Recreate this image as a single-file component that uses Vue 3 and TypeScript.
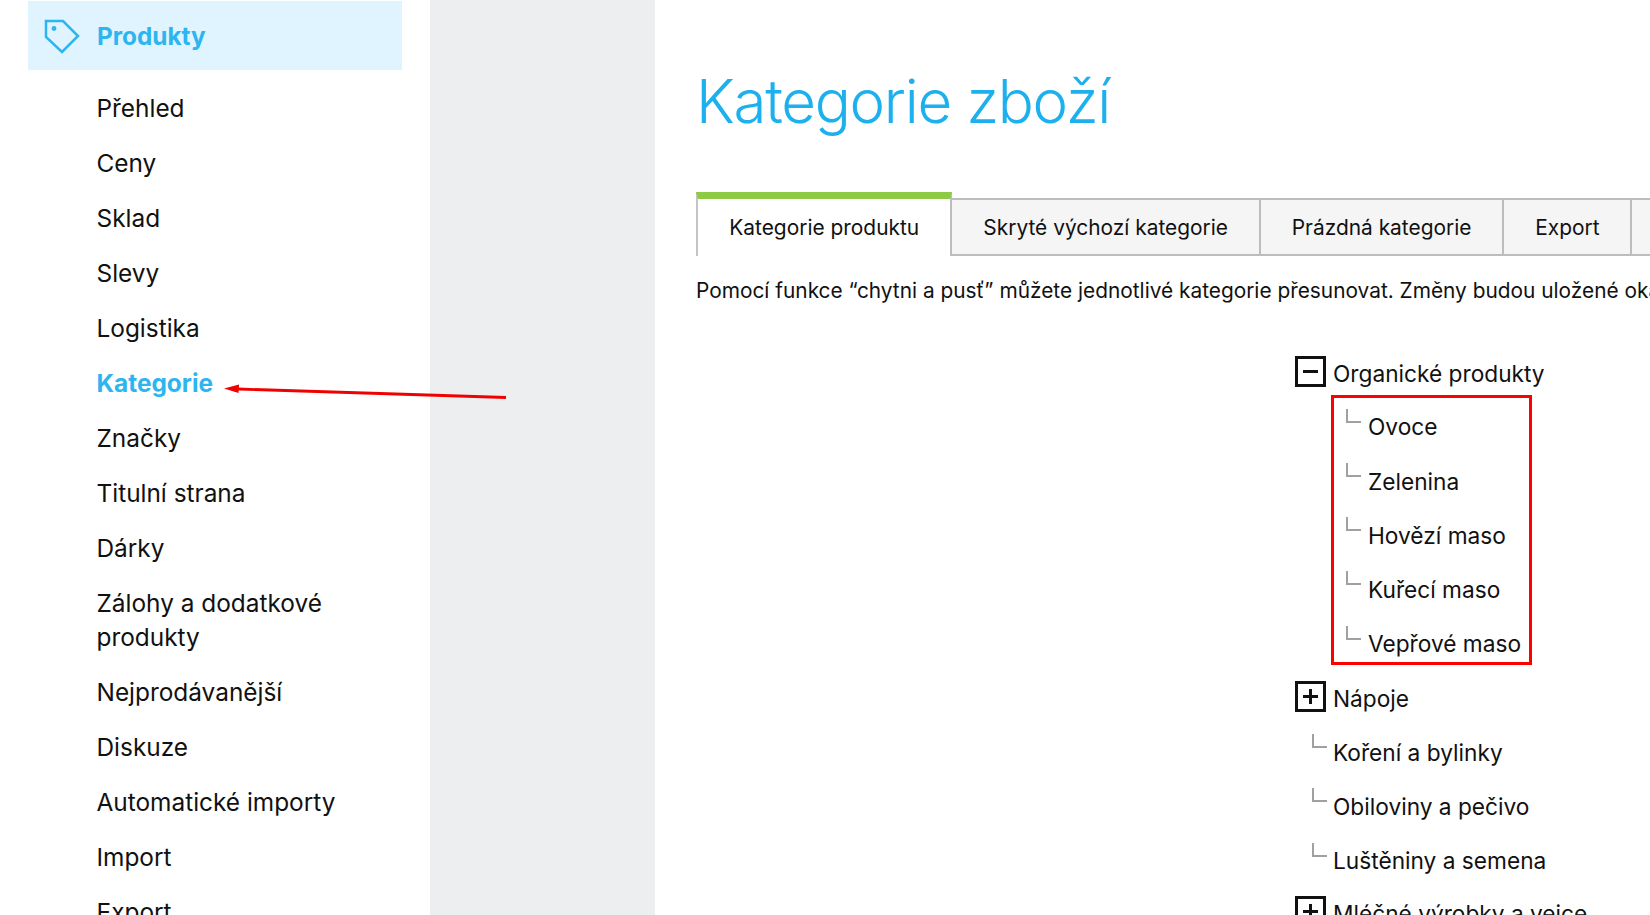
<script setup lang="ts">
interface NavItem { label: string; active?: boolean }
interface TreeGroup { label: string; open: boolean; marked?: boolean; children: string[] }

const nav: NavItem[] = [
  { label: 'Přehled' }, { label: 'Ceny' }, { label: 'Sklad' }, { label: 'Slevy' },
  { label: 'Logistika' }, { label: 'Kategorie', active: true }, { label: 'Značky' },
  { label: 'Titulní strana' }, { label: 'Dárky' }, { label: 'Zálohy a dodatkové produkty' },
  { label: 'Nejprodávanější' }, { label: 'Diskuze' }, { label: 'Automatické importy' },
  { label: 'Import' }, { label: 'Export' }
]
const tabs = ['Kategorie produktu', 'Skryté výchozí kategorie', 'Prázdná kategorie', 'Export']
const tree: TreeGroup[] = [
  { label: 'Organické produkty', open: true, marked: true, children: ['Ovoce', 'Zelenina', 'Hovězí maso', 'Kuřecí maso', 'Vepřové maso'] },
  { label: 'Nápoje', open: false, children: ['Koření a bylinky', 'Obiloviny a pečivo', 'Luštěniny a semena'] },
  { label: 'Mléčné výrobky a vejce', open: false, children: [] }
]
</script>

<template>
  <div class="page">
    <aside class="side">
      <div class="head">
        <svg class="tag" width="40" height="40" viewBox="0 0 40 40" fill="none">
          <path d="M2 5H19L34 20L18 36L2 21Z" stroke="#2db5f0" stroke-width="2.500" stroke-linejoin="miter" />
          <circle cx="10" cy="12.500" r="2.400" fill="#2db5f0" />
        </svg>
        <span>Produkty</span>
      </div>
      <ul class="nav">
        <li v-for="item in nav" :key="item.label" :class="{ active: item.active }">{{ item.label }}</li>
      </ul>
    </aside>
    <div class="gutter"></div>
    <main class="main">
      <h1>Kategorie zboží</h1>
      <div class="tabs">
        <div v-for="(t, i) in tabs" :key="t" class="tab" :class="{ on: i === 0 }">{{ t }}</div>
        <div class="tab rest"></div>
      </div>
      <p class="desc">Pomocí funkce “chytni a pusť” můžete jednotlivé kategorie přesunovat. Změny budou uložené okamžitě.</p>
      <div class="tree">
        <div v-for="g in tree" :key="g.label" class="group">
          <div class="row parent">
            <span class="box"><i class="h"></i><i v-if="!g.open" class="v"></i></span>
            <span>{{ g.label }}</span>
          </div>
          <div v-if="g.children.length" class="kids" :class="{ marked: g.marked }">
            <div v-for="c in g.children" :key="c" class="row kid">
              <span class="elbow"></span>
              <span>{{ c }}</span>
            </div>
          </div>
        </div>
      </div>
    </main>
    <svg class="arrow" width="300" height="24" viewBox="0 0 300 24">
      <path d="M282 13.500L14 5" stroke="#f00000" stroke-width="2.800" />
      <path d="M0 4.500L15 0.500L14.500 9Z" fill="#f00000" />
    </svg>
  </div>
</template>

<style>
html, body { margin: 0; background: #fff; }
</style>

<style scoped>
.page {
  position: relative;
  display: flex;
  width: 1650px;
  height: 915px;
  overflow: hidden;
  font-family: Inter, "Noto Sans", sans-serif;
  color: #111;
  background: #fff;
}
.side { width: 430px; flex: none; padding: 1px 28px 0 28px; box-sizing: border-box; }
.head {
  display: flex;
  align-items: center;
  height: 69px;
  background: #dff4ff;
  color: #2db5f0;
  font-size: 24.300px;
  font-weight: 700;
  padding-left: 16px;
}
.tag { width: 40px; height: 40px; margin-right: 13px; flex: none; }
.nav { list-style: none; margin: 10.500px 0 0; padding: 0 40px 0 68.500px; }
.nav li { font-size: 24.400px; line-height: 34px; padding: 10.500px 0; }
.nav li.active { color: #2db5f0; font-weight: 700; }
.gutter { width: 225px; flex: none; background: #edeef0; }
.main { flex: 1; min-width: 0; padding-left: 41px; overflow: hidden; }
h1 {
  margin: 64px 0 0;
  font-size: 60px;
  line-height: 74px;
  font-weight: 300;
  letter-spacing: -1.300px;
  color: #1cb0ee;
  white-space: nowrap;
}
.tabs { display: flex; align-items: flex-end; margin-top: 54px; height: 64px; white-space: nowrap; }
.tab {
  height: 58px;
  box-sizing: border-box;
  padding: 0 30.900px;
  display: flex;
  align-items: center;
  font-size: 20.900px;
  background: #f5f5f5;
  border: 2px solid #bdbdbd;
  border-left: 0;
}
.tab.on {
  height: 64px;
  padding: 0 31.300px;
  background: #fff;
  border: 0;
  border-left: 2px solid #c4c4c4;
  border-right: 2px solid #bdbdbd;
  border-top: 7px solid #8fca45;
}
.tab.rest { flex: 1; padding: 0; border-right: 0; }
.desc { margin: 17px 0 0; font-size: 20.850px; line-height: 36px; white-space: nowrap; }
.tree { margin: 38.600px 0 0 600px; font-size: 22.700px; }
.row { display: flex; align-items: center; height: 54.300px; white-space: nowrap; }
.parent { height: 52px; }
.box {
  position: relative;
  width: 31px;
  height: 31px;
  box-sizing: border-box;
  border: 3px solid #111;
  margin: -4px 7px 0 -1px;
  flex: none;
}
.box .h { position: absolute; left: 5px; right: 5px; top: 11px; height: 3px; background: #111; }
.box .v { position: absolute; top: 5px; bottom: 5px; left: 11px; width: 3px; background: #111; }
.kids { position: relative; padding-left: 16px; margin-top: 1px; }
.kid { position: relative; padding-left: 21px; }
.kids.marked { padding-left: 50px; margin: 0 0 1px; }
.kids.marked .kid { padding-left: 22px; }
.kids.marked::after {
  content: "";
  position: absolute;
  left: 35px;
  top: -5px;
  width: 201px;
  height: 270px;
  box-sizing: border-box;
  border: 3px solid #f00;
}
.elbow {
  position: absolute;
  left: 0;
  top: 9px;
  width: 15px;
  height: 14px;
  box-sizing: border-box;
  border-left: 2px solid #a0a0a4;
  border-bottom: 2px solid #a0a0a4;
}
.arrow { position: absolute; left: 224px; top: 384px; }
</style>
